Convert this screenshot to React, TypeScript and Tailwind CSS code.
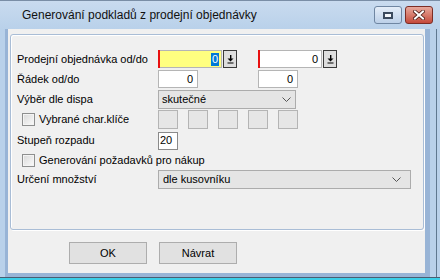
import React from "react";

const Chevron = () => (
  <svg width="9" height="5" viewBox="0 0 9 5" className="block">
    <polyline points="0.5,0.5 4.5,4.5 8.5,0.5" fill="none" stroke="#555" strokeWidth="1" />
  </svg>
);

const SpinBtn = () => (
  <div className="w-[14px] h-[18px] ml-px border border-[#3a3a3a] bg-[#dedede] flex items-center justify-center">
    <svg width="7" height="9" viewBox="0 0 7 9" className="block">
      <rect x="3" y="0" width="1.4" height="4" fill="#000" />
      <polygon points="0.5,3.5 6.5,3.5 3.5,6.5" fill="#000" />
      <rect x="0.5" y="7.5" width="6" height="1" fill="#000" />
    </svg>
  </div>
);

const Checkbox = () => (
  <div className="w-[13px] h-[13px] border border-[#8e8f8f] bg-[#f4f4f4] p-px">
    <div className="w-full h-full bg-gradient-to-br from-[#dcdcdc] to-[#f8f8f8]" />
  </div>
);

const Label = ({ children }: { children: React.ReactNode }) => (
  <div className="w-[147px] pl-[6px] h-[18px] leading-[18px] shrink-0">{children}</div>
);

export default function App() {
  return (
    <div className="w-[440px] h-[280px] overflow-hidden bg-[#b9d1ea] text-[11px] text-black font-['Liberation_Sans',Arial,sans-serif] flex flex-col">
      {/* Title bar */}
      <div className="h-[29px] shrink-0 flex items-start justify-between bg-gradient-to-b from-[#c9dbef] to-[#b9d1ea] border-t border-[#7a8ea6]">
        <div className="pl-[22px] pt-[6px] text-[12px] leading-[16px] text-[#111]">
          Generování podkladů z prodejní objednávky
        </div>
        <div className="flex gap-[3px] pt-[5px] pr-[7px]">
          <div className="w-[28px] h-[18px] rounded-[3px] border border-[#6f86a2] bg-gradient-to-b from-[#e4edf8] to-[#bcd0e8] flex items-center justify-center">
            <div className="w-[10px] h-[7px] border-2 border-[#3b4a5e] bg-[#f4f7fb]" />
          </div>
          <div className="w-[28px] h-[18px] rounded-[3px] border border-[#7c2d25] bg-gradient-to-b from-[#e6a89c] to-[#c4483a] flex items-center justify-center">
            <svg width="12" height="10" viewBox="0 0 12 10" className="block">
              <path d="M2 1.5 L10 8.5 M10 1.5 L2 8.5" stroke="#4a1a14" strokeWidth="3.6" strokeLinecap="square" />
              <path d="M2 1.5 L10 8.5 M10 1.5 L2 8.5" stroke="#ffffff" strokeWidth="2" strokeLinecap="square" />
            </svg>
          </div>
        </div>
      </div>

      {/* Client */}
      <div className="flex shrink-0">
        <div className="w-[5px] shrink-0" />
        <div className="w-[425px] h-[248px] border-l-[3px] border-r-[5px] border-b-[4px] border-[#98b4d6] bg-[#f0f0f0] shrink-0">
          <div className="ml-[2px] mt-[5px] w-[414px] h-[196px] border border-[#a9bdd6] rounded-[3px] shadow-[inset_1px_1px_0_#ffffff,1px_1px_0_#ffffff] pt-[15px] flex flex-col">
            {/* Row 1 */}
            <div className="h-[20px] flex items-start">
              <Label>Prodejní objednávka od/do</Label>
              <div className="flex">
                <div className="w-[2px] h-[18px] bg-[#e81010]" />
                <div className="w-[62px] h-[18px] bg-[#ffff80] border-y border-r border-[#b5b5b5] flex items-center justify-end pr-[2px]">
                  <span className="bg-[#0078d7] text-white leading-[13px] px-px">0</span>
                </div>
                <SpinBtn />
              </div>
              <div className="flex ml-[21px]">
                <div className="w-[2px] h-[18px] bg-[#e81010]" />
                <div className="w-[62px] h-[18px] bg-white border-y border-r border-[#b5b5b5] flex items-center justify-end pr-[3px]">
                  0
                </div>
                <SpinBtn />
              </div>
            </div>
            {/* Row 2 */}
            <div className="h-[20px] flex items-start">
              <Label>Řádek od/do</Label>
              <div className="w-[40px] h-[18px] bg-white border border-[#b5b5b5] flex items-center justify-end pr-[4px]">0</div>
              <div className="w-[40px] h-[18px] ml-[60px] bg-white border border-[#b5b5b5] flex items-center justify-end pr-[4px]">0</div>
            </div>
            {/* Row 3 */}
            <div className="h-[20px] flex items-start">
              <Label>Výběr dle dispa</Label>
              <div className="w-[138px] h-[19px] bg-[#e5e5e5] border border-[#acacac] flex items-center justify-between pl-[3px] pr-[4px]">
                <span>skutečné</span>
                <Chevron />
              </div>
            </div>
            {/* Row 4 */}
            <div className="h-[20px] flex items-start">
              <div className="w-[147px] h-[19px] pl-[11px] flex items-center gap-[4px] shrink-0">
                <Checkbox />
                <span>Vybrané char.klíče</span>
              </div>
              <div className="flex gap-[10px]">
                <div className="w-[20px] h-[19px] bg-[#e6e6e6] border border-[#b4b4b4]" />
                <div className="w-[20px] h-[19px] bg-[#e6e6e6] border border-[#b4b4b4]" />
                <div className="w-[20px] h-[19px] bg-[#e6e6e6] border border-[#b4b4b4]" />
                <div className="w-[20px] h-[19px] bg-[#e6e6e6] border border-[#b4b4b4]" />
                <div className="w-[20px] h-[19px] bg-[#e6e6e6] border border-[#b4b4b4]" />
              </div>
            </div>
            {/* Row 5 */}
            <div className="h-[20px] flex items-center">
              <Label>Stupeň rozpadu</Label>
              <div className="w-[20px] h-[18px] mt-px bg-white border border-[#8a8a8a] flex items-center pl-px">20</div>
            </div>
            {/* Row 6 */}
            <div className="h-[20px] flex items-center pl-[11px] gap-[4px]">
              <Checkbox />
              <span>Generování požadavků pro nákup</span>
            </div>
            {/* Row 7 */}
            <div className="h-[20px] flex items-start">
              <Label>Určení množství</Label>
              <div className="w-[253px] h-[19px] bg-[#e5e5e5] border border-[#acacac] flex items-center justify-between pl-[4px] pr-[9px]">
                <span>dle kusovníku</span>
                <Chevron />
              </div>
            </div>
          </div>
          {/* Buttons */}
          <div className="flex gap-[12px] ml-[61px] mt-[12px]">
            <div className="w-[78px] h-[22px] bg-[#e1e1e1] border border-[#adadad] flex items-center justify-center">OK</div>
            <div className="w-[78px] h-[22px] bg-[#e1e1e1] border border-[#adadad] flex items-center justify-center">Návrat</div>
          </div>
        </div>
        <div className="w-[6px] shrink-0" />
        <div className="w-[1px] bg-[#5f7890] shrink-0" />
      </div>
      <div className="h-px bg-[#4a5d72] shrink-0" />
      <div className="h-[2px] bg-[#3ccde6] shrink-0" />
    </div>
  );
}
